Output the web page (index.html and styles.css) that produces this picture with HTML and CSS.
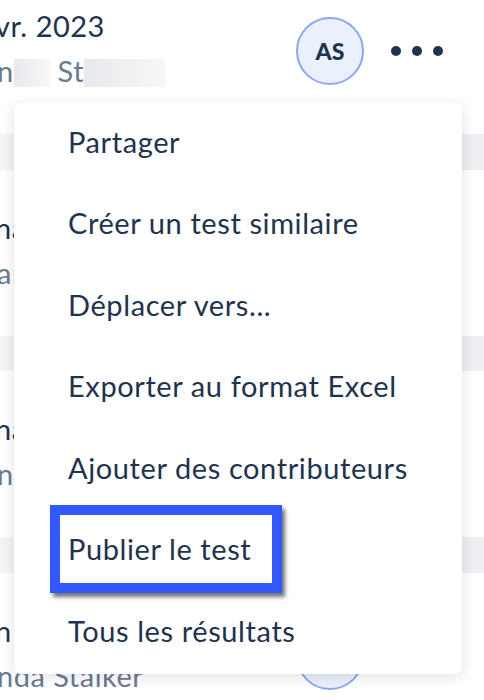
FILE: index.html
```html
<!DOCTYPE html>
<html>
<head>
    <meta charset="utf-8">
    <title>Tests</title>
    <link rel="stylesheet" href="styles.css">
</head>
<body>
    <div class="list">
        <div class="row">
            <div class="row-body">
                <div class="row-text">
                    <div class="date">vr. 2023</div>
                    <div class="owner">n<span class="redact r1"></span> St<span class="redact r2"></span></div>
                </div>
                <div class="avatar">AS</div>
                <div class="more"><span></span><span></span><span></span></div>
            </div>
            <div class="band"></div>
        </div>
        <div class="row">
            <div class="row-body">
                <div class="row-text">
                    <div class="date">na</div>
                    <div class="owner">ar</div>
                </div>
                <div class="avatar"></div>
                <div class="more"><span></span><span></span><span></span></div>
            </div>
            <div class="band"></div>
        </div>
        <div class="row">
            <div class="row-body">
                <div class="row-text">
                    <div class="date">na</div>
                    <div class="owner">n</div>
                </div>
                <div class="avatar"></div>
                <div class="more"><span></span><span></span><span></span></div>
            </div>
            <div class="band"></div>
        </div>
        <div class="row">
            <div class="row-body">
                <div class="row-text">
                    <div class="date">n</div>
                    <div class="owner">nda Stalker</div>
                </div>
                <div class="avatar"></div>
                <div class="more"><span></span><span></span><span></span></div>
            </div>
        </div>
    </div>

    <ul class="menu">
        <li>Partager</li>
        <li>Créer un test similaire</li>
        <li>Déplacer vers...</li>
        <li>Exporter au format Excel</li>
        <li>Ajouter des contributeurs</li>
        <li>Publier le test</li>
        <li>Tous les résultats</li>
    </ul>

    <div class="highlight"></div>
</body>
</html>
```

FILE: styles.css
```css
body { margin: 0; width: 484px; height: 700px; overflow: hidden; position: relative; background: #fff; font-family: Lato, "Noto Sans", sans-serif; color: #1e3350; }

.list { margin-top: -32px; }
.row-body { height: 166px; display: flex; align-items: center; }
.band { height: 35.5px; background: linear-gradient(90deg, #f3f4f6, #f1f2f4 80%, #eceef1); }
.row-text { flex: 1; padding-bottom: 6px; margin-left: -5px; font-size: 29px; letter-spacing: 0.5px; }
.date { line-height: 45px; }
.owner { line-height: 45px; color: #6a7a90; padding-left: 2px; }
.redact { display: inline-block; height: 28px; vertical-align: -5px; background: linear-gradient(90deg, #e8e9ed, #f7f7f8); }
.redact.r1 { width: 36px; }
.redact.r2 { width: 81px; }

.avatar { width: 64px; height: 64px; border: 2px solid #8ba6fb; border-radius: 50%; background: #ebf0fd; display: flex; align-items: center; justify-content: center; font-weight: 900; font-size: 23px; }
.more { display: flex; gap: 11px; margin: 0 41px 0 27px; }
.more span { width: 10px; height: 10px; border-radius: 50%; background: #1e3350; }

.menu { position: absolute; left: 14px; top: 103px; width: 448px; margin: 0; padding: 0; list-style: none; background: #fff; border-radius: 7px; box-shadow: 0 3px 14px rgba(20, 30, 50, 0.13); }
.menu li { height: 81.5px; box-sizing: border-box; padding: 0 0 5px 54px; display: flex; align-items: center; font-size: 29px; letter-spacing: 0.6px; }

.highlight { position: absolute; left: 50px; top: 505px; width: 212px; height: 68px; border: 10px solid #3159ff; box-shadow: 3px 4px 4px rgba(0, 0, 0, 0.55); }
```
